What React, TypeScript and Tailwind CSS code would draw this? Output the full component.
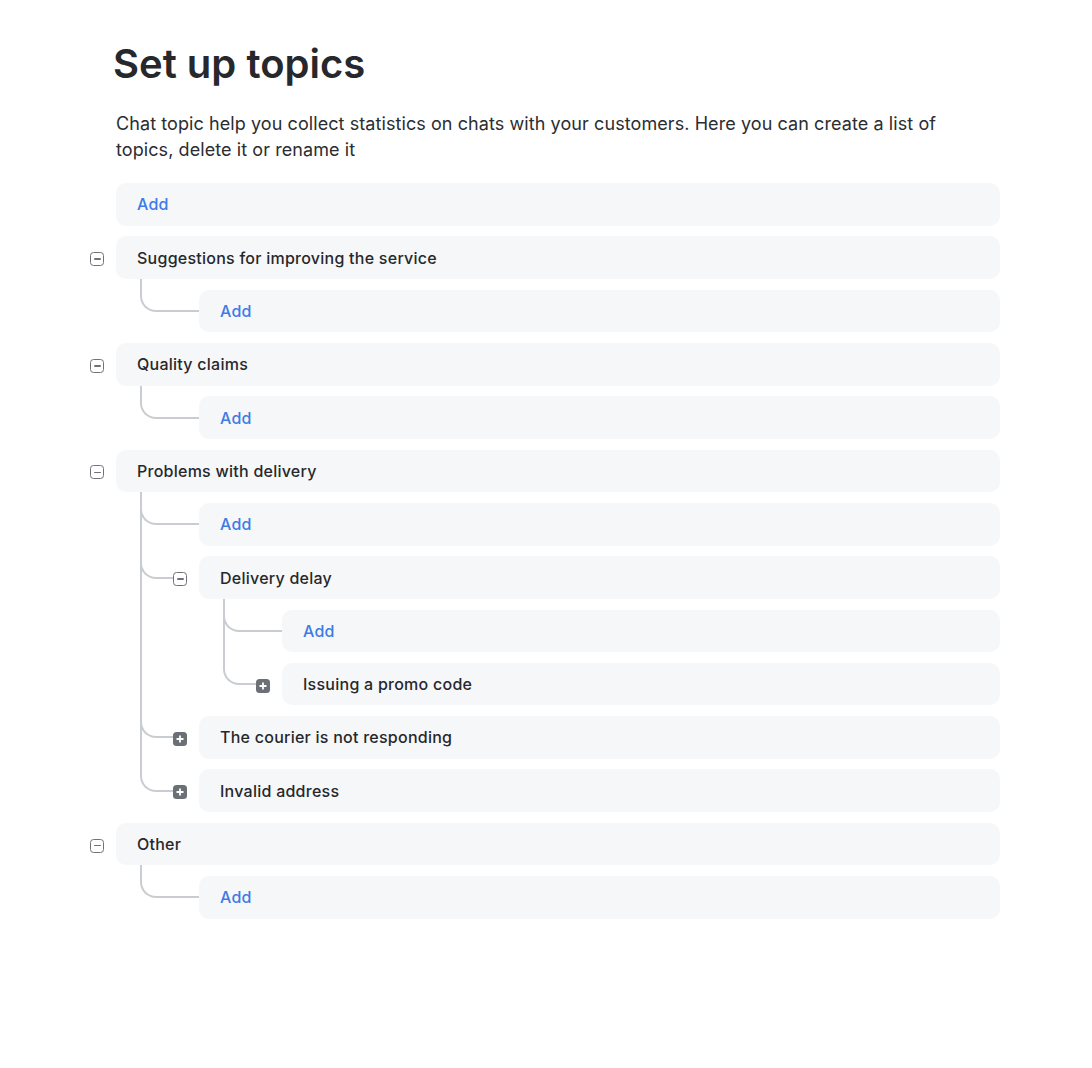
import React from 'react';

type TopicNode = {
  label: string;
  add?: boolean;
  open?: boolean;
  children?: TopicNode[];
};

const add = (): TopicNode => ({ label: 'Add', add: true });

const topics: TopicNode[] = [
  add(),
  { label: 'Suggestions for improving the service', open: true, children: [add()] },
  { label: 'Quality claims', open: true, children: [add()] },
  {
    label: 'Problems with delivery',
    open: true,
    children: [
      add(),
      {
        label: 'Delivery delay',
        open: true,
        children: [add(), { label: 'Issuing a promo code', open: false, children: [add()] }],
      },
      { label: 'The courier is not responding', open: false, children: [add()] },
      { label: 'Invalid address', open: false, children: [add()] },
    ],
  },
  { label: 'Other', open: true, children: [add()] },
];

const Toggle: React.FC<{ open: boolean }> = ({ open }) =>
  open ? (
    <span className="mt-[3px] flex h-[14px] w-[14px] items-center justify-center rounded-[3.5px] border-[1.6px] border-[#6f7278] bg-white">
      <span className="h-[1.6px] w-[7px] rounded-full bg-[#6f7278]" />
    </span>
  ) : (
    <span className="mt-[3px] flex h-[14px] w-[14px] items-center justify-center rounded-[3.5px] bg-[#6b6f76]">
      <svg width="8" height="8" viewBox="0 0 8 8">
        <path d="M4 0.5v7M0.5 4h7" stroke="#fff" strokeWidth="1.8" />
      </svg>
    </span>
  );

const Item: React.FC<{ node: TopicNode; nested: boolean; last: boolean }> = ({ node, nested, last }) => {
  const hasToggle = !node.add && !!node.children;
  return (
    <div className="relative">
      {/* tree connector lines */}
      {nested && !last && (
        <div className="absolute left-[-33px] top-[-10.67px] bottom-0 w-[2px] bg-[#c9ccd1]" />
      )}
      {nested && (
        <div
          className={`absolute left-[-33px] top-[-10.67px] h-[33px] rounded-bl-[16px] border-b-2 border-l-2 border-[#c9ccd1] ${
            hasToggle ? 'w-[33px]' : 'w-[59px]'
          }`}
        />
      )}
      <div className="flex items-center">
        <div className="flex w-[26px] shrink-0">{hasToggle && <Toggle open={!!node.open} />}</div>
        <div
          className={`flex h-[42.67px] flex-1 items-center rounded-[10px] bg-[#f6f7f9] pl-[21px] text-[16px] font-medium tracking-[0.25px] ${
            node.add ? 'text-[#3d7be6]' : 'text-[#26282c]'
          }`}
        >
          {node.label}
        </div>
      </div>
      {node.open && node.children && (
        <div className="mt-[10.67px] flex flex-col gap-[10.67px] pl-[83px]">
          {node.children.map((c, i) => (
            <Item key={i} node={c} nested last={i === node.children!.length - 1} />
          ))}
        </div>
      )}
    </div>
  );
};

export default function App() {
  return (
    <div className="min-h-screen bg-white font-['Inter','Liberation_Sans',sans-serif] antialiased">
      <div className="ml-[90px] w-[910px] pt-[40px]">
        <div className="pl-[26px]">
          <h1 className="ml-[-3px] text-[40px] font-semibold leading-[48px] text-[#26282c]">Set up topics</h1>
          <p className="mt-[23px] max-w-[850px] text-[18px] leading-[26px] tracking-[0.08px] text-[#2b2d31]">
            Chat topic help you collect statistics on chats with your customers. Here you can create a list of
            topics, delete it or rename it
          </p>
        </div>
        <div className="mt-[20px] flex flex-col gap-[10.67px]">
          {topics.map((t, i) => (
            <Item key={i} node={t} nested={false} last={i === topics.length - 1} />
          ))}
        </div>
      </div>
    </div>
  );
}
